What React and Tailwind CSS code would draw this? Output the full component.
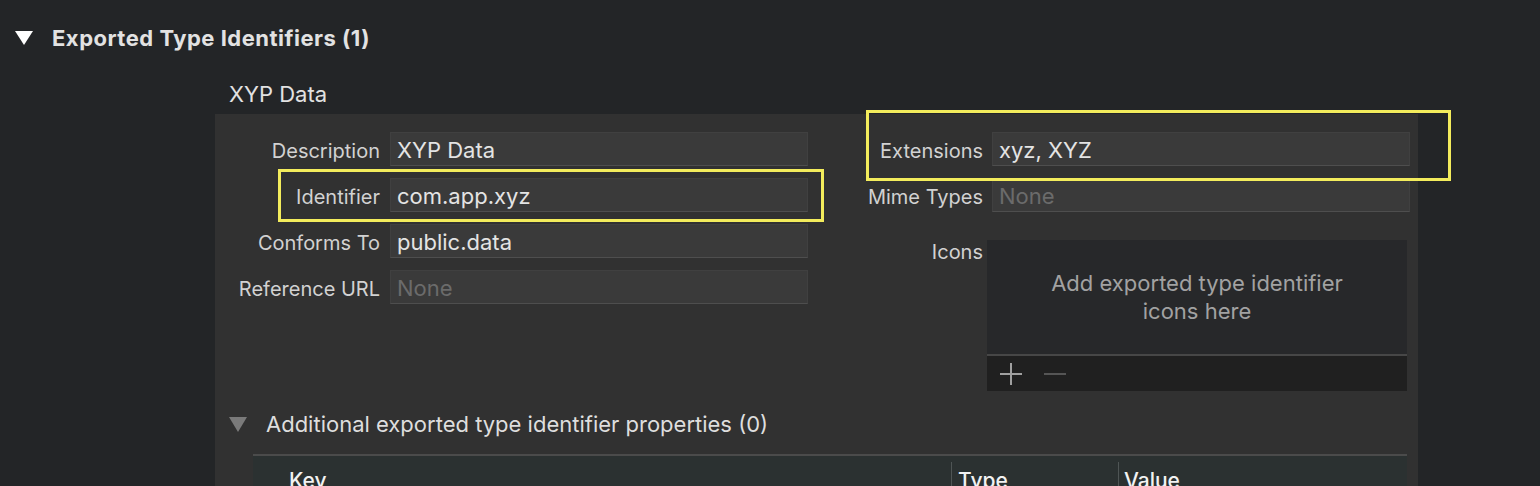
import React from 'react';

const Field = ({ value, placeholder }) => (
    <div className="w-[418px] h-[34px] bg-[#3a3a3a] border border-[#404040] border-b-[#4e4e4e] flex items-center px-[6px] pt-[2px] text-[22px]">
        {value ? <span className="text-[#e4e4e4]">{value}</span> : <span className="text-[#6b6b6b]">{placeholder}</span>}
    </div>
);

const Row = ({ label, labelWidth, gap, children }) => (
    <div className="flex items-center h-[34px]">
        <div className={`${labelWidth} pt-[3px] text-right text-[20px] text-[#d2d2d2] whitespace-nowrap`}>{label}</div>
        <div className={gap}>{children}</div>
    </div>
);

const Triangle = ({ color, w, h }) => (
    <svg width={w} height={h} viewBox={`0 0 ${w} ${h}`}>
        <polygon points={`0,0 ${w},0 ${w / 2},${h}`} fill={color} />
    </svg>
);

export default function App() {
    return (
        <div className="w-[1540px] h-[486px] bg-[#232527] overflow-hidden relative flex flex-col font-['Inter','Liberation_Sans',sans-serif]">
            {/* section header */}
            <div className="flex items-center h-6 mt-[26px] pl-[15px]">
                <Triangle color="#ffffff" w={18} h={14} />
                <span className="ml-[19px] text-[22px] font-bold text-[#e2e2e2] tracking-[0.5px]">Exported Type Identifiers (1)</span>
            </div>

            <div className="mt-8 pl-[229px] h-6 flex items-center text-[22px] text-[#e2e2e2]">XYP Data</div>

            <div className="mt-2 ml-[215px] w-[1203px] flex-1 bg-[#313131] pt-[18px]">
                <div className="flex">
                    {/* left column */}
                    <div className="flex flex-col gap-[12px]">
                        <Row label="Description" labelWidth="w-[165px]" gap="ml-[10px]"><Field value="XYP Data" /></Row>
                        <Row label="Identifier" labelWidth="w-[165px]" gap="ml-[10px]"><Field value="com.app.xyz" /></Row>
                        <Row label="Conforms To" labelWidth="w-[165px]" gap="ml-[10px]"><Field value="public.data" /></Row>
                        <Row label="Reference URL" labelWidth="w-[165px]" gap="ml-[10px]"><Field placeholder="None" /></Row>
                    </div>

                    {/* right column */}
                    <div className="flex flex-col gap-[12px]">
                        <Row label="Extensions" labelWidth="w-[175px]" gap="ml-[9px]"><Field value="xyz, XYZ" /></Row>
                        <Row label="Mime Types" labelWidth="w-[175px]" gap="ml-[9px]"><Field placeholder="None" /></Row>
                        <div className="flex items-start mt-[16px]">
                            <div className="w-[175px] text-right text-[20px] leading-[20px] pt-[2px] text-[#d2d2d2]">Icons</div>
                            <div className="ml-[4px] w-[420px] flex flex-col">
                                <div className="h-[114px] bg-[#27282a] flex items-center justify-center text-center text-[22px] leading-[28px] text-[#a2a2a2]">
                                    Add exported type identifier<br />icons here
                                </div>
                                <div className="h-[2px] bg-[#474747]" />
                                <div className="h-[35px] bg-[#202020] flex items-center pl-[13px] gap-[22px]">
                                    <svg width="22" height="22" viewBox="0 0 22 22">
                                        <path d="M11 0V22M0 11H22" stroke="#a0a0a0" strokeWidth="2" />
                                    </svg>
                                    <svg width="22" height="22" viewBox="0 0 22 22">
                                        <path d="M0 11H22" stroke="#555555" strokeWidth="2" />
                                    </svg>
                                </div>
                            </div>
                        </div>
                    </div>
                </div>

                {/* additional properties */}
                <div className="flex items-center h-6 mt-[21px] pl-[14px]">
                    <Triangle color="#7a7a7a" w={18} h={15} />
                    <span className="ml-[19px] text-[22px] text-[#dedede]">Additional exported type identifier properties (0)</span>
                </div>

                <div className="mt-[18px] ml-[38px] w-[1154px] border-t-2 border-[#4b4b4b] bg-[#2b3131] h-[40px] flex text-[21px] font-medium text-[#f2f2f2]">
                    <div className="w-[698px] pl-[36px] pt-[9px]">Key</div>
                    <div className="w-[167px] border-l border-[#4f5555] mt-[6px] pl-[6px] pt-[3px]">Type</div>
                    <div className="flex-1 border-l border-[#4f5555] mt-[6px] pl-[5px] pt-[3px]">Value</div>
                </div>
            </div>

            {/* annotation highlights */}
            <div className="absolute left-[278px] top-[169px] w-[546px] h-[53px] border-[3px] border-[#f3ec5c]" />
            <div className="absolute left-[866px] top-[110px] w-[585px] h-[71px] border-[3px] border-[#f3ec5c]" />
        </div>
    );
}
